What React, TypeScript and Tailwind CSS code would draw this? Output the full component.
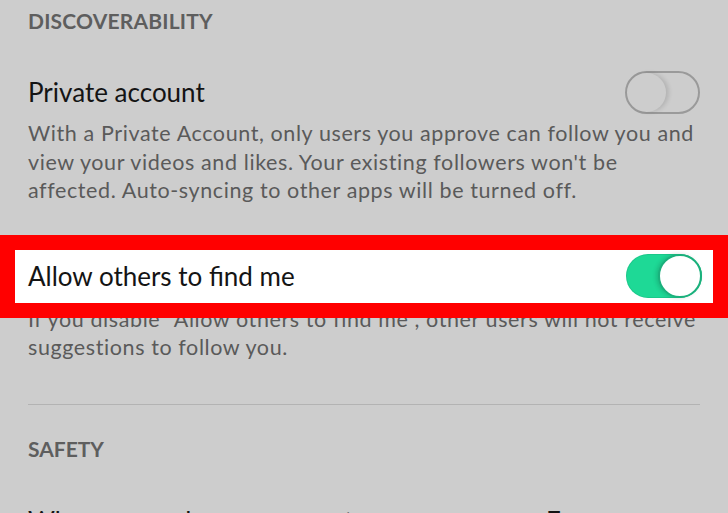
export default function App() {
  return (
    <div className="w-[728px] h-[513px] overflow-hidden bg-[#cdcdcd] font-['Lato','Open_Sans',sans-serif]">
      <div className="px-[28px] pt-[7px]">
        <h3 className="text-[21px] leading-[28px] font-bold text-[#5e5e5e] tracking-[0.2px]">DISCOVERABILITY</h3>
        <div className="mt-[35px] flex items-center justify-between h-[44px]">
          <span className="text-[26px] text-[#141414]">Private account</span>
          <div className="w-[75px] h-[43px] rounded-full border-[2px] border-[#9a9a9a] relative">
            <div className="absolute left-0 top-0 w-[39px] h-[39px] rounded-full shadow-[3px_0_4px_rgba(0,0,0,0.12)]" />
          </div>
        </div>
        <p className="mt-[5px] text-[21.5px] leading-[28.5px] tracking-[0.6px] text-[#5a5a5a]">
          With a Private Account, only users you approve can follow you and view your videos and likes. Your existing followers won't be affected. Auto-syncing to other apps will be turned off.
        </p>
      </div>

      <div className="relative mt-[30px]">
        <div className="relative z-10 border-[15px] border-[#ff0000] bg-white h-[83px] flex items-center justify-between pl-[13px] pr-[11px]">
          <span className="text-[26px] text-[#141414]">Allow others to find me</span>
          <div className="w-[76px] h-[44px] rounded-full bg-[#1ed996] relative shadow-[inset_0_0_0_1px_rgba(0,0,0,0.08)]">
            <div className="absolute right-0 top-0 w-[44px] h-[44px] rounded-full bg-white border-[2px] border-[#1bb07c] shadow-[-2px_0_4px_rgba(0,0,0,0.15)]" />
          </div>
        </div>
        <p className="-mt-[13px] px-[28px] text-[21.5px] leading-[28.5px] tracking-[0.6px] text-[#5a5a5a]">
          If you disable "Allow others to find me", other users will not receive suggestions to follow you.
        </p>
      </div>

      <div className="px-[28px]">
        <div className="mt-[42px] h-px bg-[#b3b3b3]" />
        <h3 className="mt-[30px] text-[21px] leading-[28px] font-bold text-[#5e5e5e]">SAFETY</h3>
        <div className="mt-[42px] flex items-center justify-between text-[26px] leading-[32px] text-[#141414]">
          <span>Who can send you comments</span>
          <span className="flex items-center gap-[40px]">
            <span>Everyone</span>
            <span>›</span>
          </span>
        </div>
      </div>
    </div>
  );
}
